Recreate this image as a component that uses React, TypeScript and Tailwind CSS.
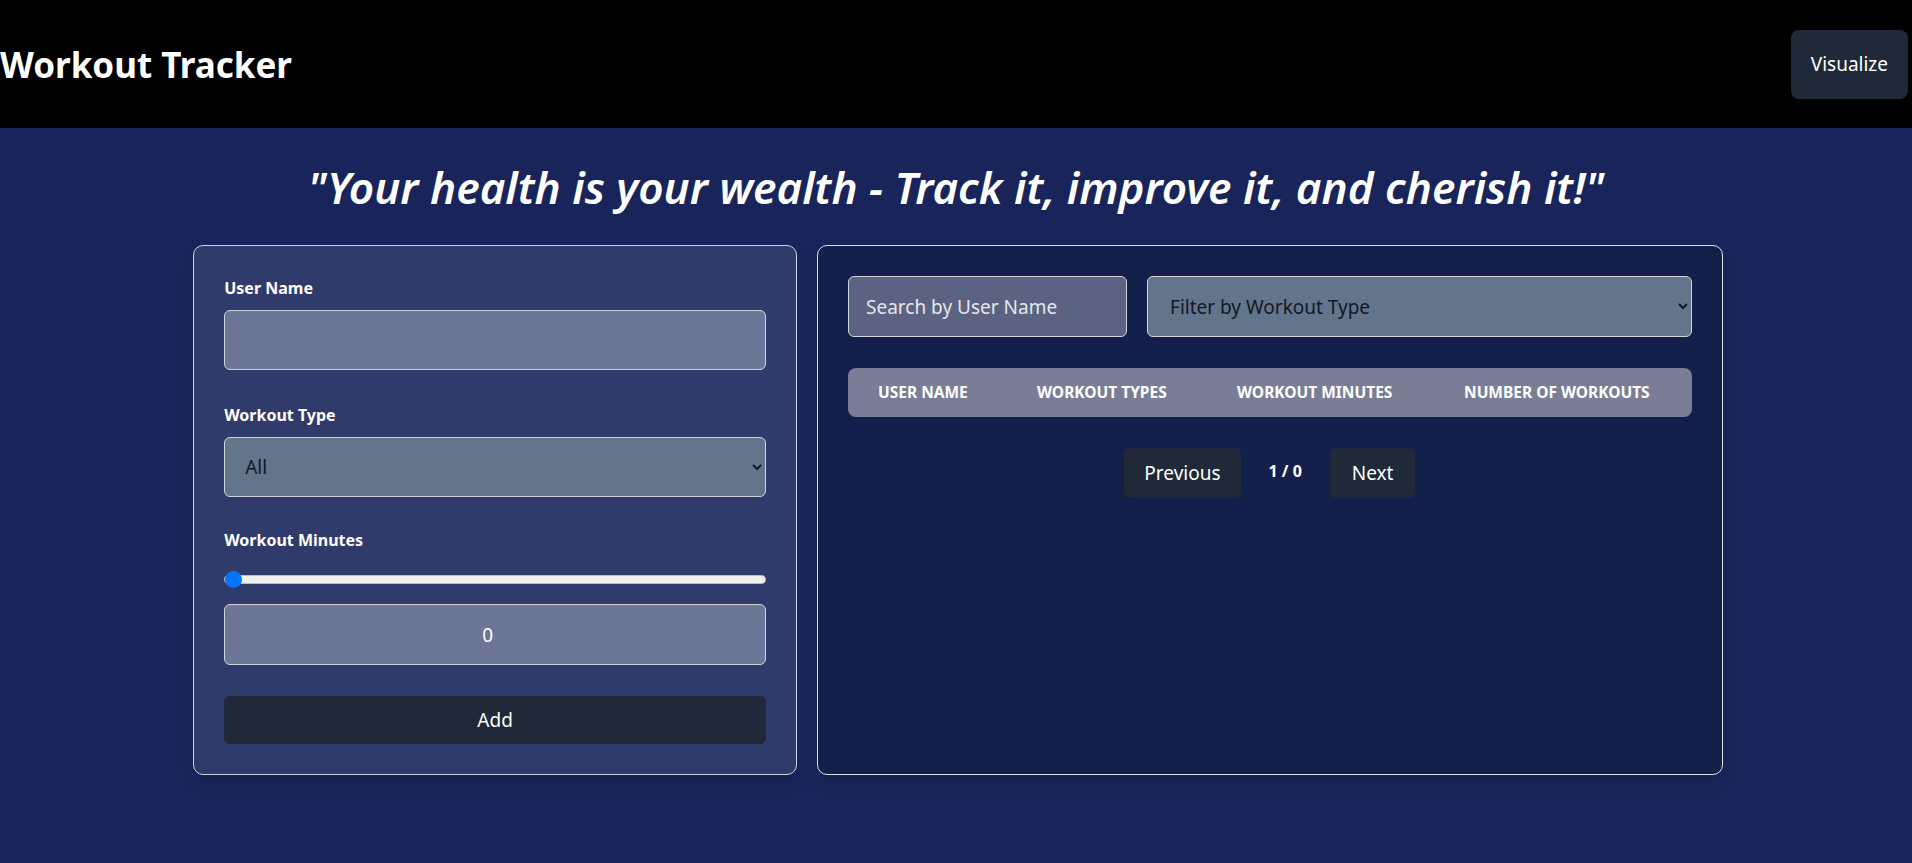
import React, { useState } from 'react';

const workoutTypes = ['All', 'Running', 'Cycling', 'Swimming', 'Yoga'];

export default function App() {
    const [userName, setUserName] = useState('');
    const [workoutType, setWorkoutType] = useState('All');
    const [minutes, setMinutes] = useState(0);
    const [search, setSearch] = useState('');
    const [filter, setFilter] = useState('');

    return (
        <div className="min-h-screen bg-[#19255a] font-['Noto_Sans','Open_Sans',sans-serif] text-white">
            {/* header */}
            <header className="flex h-[128px] items-center justify-between bg-black">
                <h1 className="text-[35px] font-bold leading-none">Workout Tracker</h1>
                <button className="mr-1 h-[69px] rounded-lg bg-[#1f2937] px-5 text-[19px]">Visualize</button>
            </header>

            <h2 className="mt-[34px] mb-[33px] text-center text-[44px] font-semibold italic leading-[50px]">
                "Your health is your wealth - Track it, improve it, and cherish it!"
            </h2>

            <div className="mx-auto grid w-4/5 translate-x-[2px] grid-cols-[minmax(0,2fr)_minmax(0,3fr)] gap-5">
                {/* form */}
                <div className="rounded-[10px] border border-[#cfd3df] bg-white/10 p-[30px] shadow-lg">
                    <label className="mb-[10px] block text-[16px] font-bold leading-6">User Name</label>
                    <input
                        value={userName}
                        onChange={e => setUserName(e.target.value)}
                        className="h-[60px] w-full rounded-md border border-[#d1d5db] bg-white/30 px-4 text-[19px] outline-none"
                    />

                    <label className="mt-[33px] mb-[10px] block text-[16px] font-bold leading-6">Workout Type</label>
                    <select
                        value={workoutType}
                        onChange={e => setWorkoutType(e.target.value)}
                        className="h-[60px] w-full rounded-md border border-[#d1d5db] bg-[#64748b] pl-4 pr-2 text-[19px] text-[#111827] outline-none"
                    >
                        {workoutTypes.map(t => (
                            <option key={t}>{t}</option>
                        ))}
                    </select>

                    <label className="mt-[31px] block text-[16px] font-bold leading-6">Workout Minutes</label>
                    <input
                        type="range"
                        min={0}
                        max={120}
                        value={minutes}
                        onChange={e => setMinutes(Number(e.target.value))}
                        className="mt-[23px] block h-[9px] w-full cursor-pointer appearance-none rounded-full border border-[#bdbdbd] bg-[#efefef] [&::-webkit-slider-thumb]:h-[17px] [&::-webkit-slider-thumb]:w-[17px] [&::-webkit-slider-thumb]:appearance-none [&::-webkit-slider-thumb]:rounded-full [&::-webkit-slider-thumb]:bg-[#0075ff]"
                    />
                    <input
                        type="number"
                        value={minutes}
                        onChange={e => setMinutes(Number(e.target.value))}
                        className="mt-[20px] h-[61px] w-full rounded-md border border-[#d1d5db] bg-white/30 text-center text-[19px] outline-none"
                    />

                    <button className="mt-[31px] h-[48px] w-full rounded-md bg-[#1f2937] text-[19px]">Add</button>
                </div>

                {/* list */}
                <div className="rounded-[10px] border border-[#dfe2ea] bg-black/15 p-[30px] shadow-lg">
                    <div className="flex gap-5">
                        <input
                            value={search}
                            onChange={e => setSearch(e.target.value)}
                            placeholder="Search by User Name"
                            className="h-[61px] w-[279px] rounded-md border border-[#d1d5db] bg-white/30 px-[17px] text-[19px] outline-none placeholder:text-[#e5e7eb]"
                        />
                        <select
                            value={filter}
                            onChange={e => setFilter(e.target.value)}
                            className="h-[61px] min-w-0 flex-1 rounded-md border border-[#d1d5db] bg-[#64748b] pl-[18px] pr-2 text-[19px] text-[#111827] outline-none"
                        >
                            <option value="">Filter by Workout Type</option>
                            {workoutTypes.slice(1).map(t => (
                                <option key={t}>{t}</option>
                            ))}
                        </select>
                    </div>

                    <div className="mt-[31px] grid h-[49px] grid-cols-[159px_200px_227px_1fr] items-center rounded-lg bg-[#797e96] pl-[30px] text-[15.5px] font-bold uppercase">
                        <div>User Name</div>
                        <div>Workout Types</div>
                        <div>Workout Minutes</div>
                        <div>Number of Workouts</div>
                    </div>

                    <div className="mt-[31px] flex items-center justify-center">
                        <button className="h-[50px] rounded-md bg-[#1f2937] px-5 text-[19px]">Previous</button>
                        <span className="mx-[28px] -mt-1 text-[16px] font-bold">1 / 0</span>
                        <button className="h-[50px] rounded-md bg-[#1f2937] px-[22px] text-[19px]">Next</button>
                    </div>
                </div>
            </div>
        </div>
    );
}
